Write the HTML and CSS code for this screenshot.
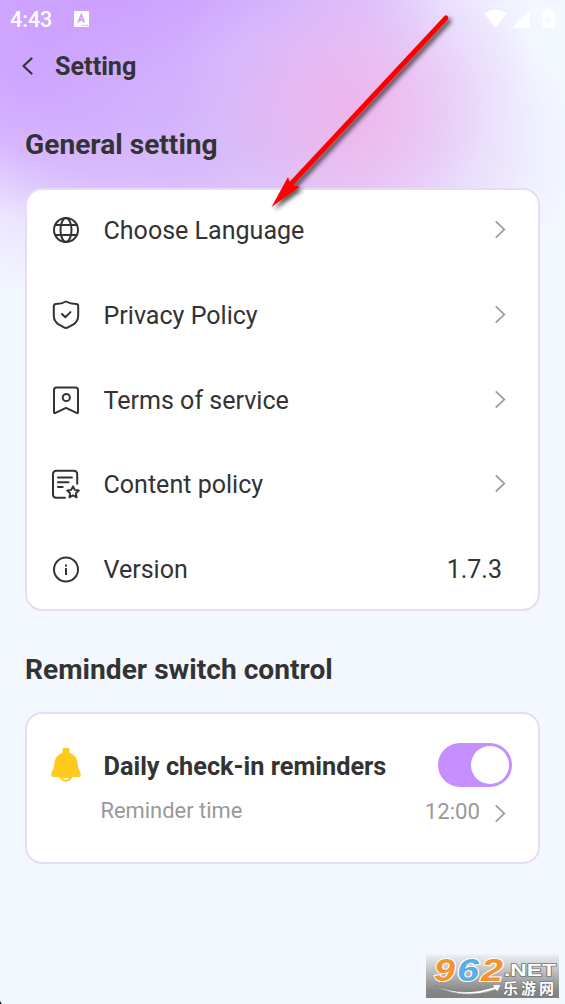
FILE: index.html
```html
<!DOCTYPE html>
<html lang="en">
<head>
<meta charset="utf-8">
<title>Setting</title>
<link rel="stylesheet" href="styles.css">
</head>
<body>
<main class="screen">
  <header class="status">
    <span class="clock">4:43</span>
    <svg class="badge" width="15" height="16" viewBox="0 0 15 16"><rect width="15" height="16" rx="1" fill="#fff"/><path d="M4.200 11.500 7.200 4l3 7.500M5.200 9h4" fill="none" stroke="#cda3fd" stroke-width="1.900"/><path d="M8 14.300h1.300M10.300 14.300h1.300M12.600 14.300h1.300" stroke="#cda3fd" stroke-width="1.300"/></svg>
    <svg class="signals" width="72" height="20" viewBox="0 0 72 20" fill="#fff"><path d="M0 4Q11.500-3 23 4L11.500 19Z"/><path d="M46 1v18H28Z"/><path fill-rule="evenodd" d="M62 0h5v2h2q1.500 0 1.500 1.500v14q0 1.500-1.500 1.500h-9q-1.500 0-1.500-1.500v-14Q58.500 2 60 2h2ZM65.500 5l-4 6h2.500l-.5 5 4-6.500H65Z"/></svg>
  </header>
  <nav class="topbar">
    <svg width="13" height="18" viewBox="0 0 13 18"><path d="M10.500 1.500 2.500 9l8 7.500" fill="none" stroke="#333" stroke-width="2.200" stroke-linecap="round" stroke-linejoin="round"/></svg>
    <h1 class="title">Setting</h1>
  </nav>

  <h2 class="heading general">General setting</h2>
  <section class="card list">
    <div class="row">
      <svg class="icon" viewBox="0 0 30 30"><circle cx="15" cy="15" r="12"/><ellipse cx="15" cy="15" rx="5.500" ry="12"/><path d="M4.500 10h21M4.500 20h21"/></svg>
      <span class="label">Choose Language</span>
      <svg class="chevron" viewBox="0 0 12 20"><path d="M1.500 1.500 10.500 10l-9 8.500"/></svg>
    </div>
    <div class="row">
      <svg class="icon" viewBox="0 0 30 30"><path d="M15 1.500Q19 3.800 25.200 4.100 27.200 4.300 27.200 6.300V15.500Q27.200 21.500 22 24.700L17 27.400Q15 28.500 13 27.400L8 24.700Q2.800 21.500 2.800 15.500V6.300Q2.800 4.300 4.800 4.100 11 3.800 15 1.500ZM11 14l3.300 3.300 5.200-5.200"/></svg>
      <span class="label">Privacy Policy</span>
      <svg class="chevron" viewBox="0 0 12 20"><path d="M1.500 1.500 10.500 10l-9 8.500"/></svg>
    </div>
    <div class="row">
      <svg class="icon" viewBox="0 0 30 30"><path d="M5.500 2.500h19q2.500 0 2.500 2.500v22q0 1.700-1.500.9L15 22.800 4.500 27.900Q3 28.700 3 27V5q0-2.500 2.500-2.500Z"/><circle cx="15.300" cy="12.500" r="3.600"/></svg>
      <span class="label">Terms of service</span>
      <svg class="chevron" viewBox="0 0 12 20"><path d="M1.500 1.500 10.500 10l-9 8.500"/></svg>
    </div>
    <div class="row">
      <svg class="icon" viewBox="0 0 30 30"><path d="M14 28.800H5.500q-3.500 0-3.500-3.500V5.300q0-3.500 3.500-3.500h17.200q3.500 0 3.500 3.500v9.500M7 8.500h14M7 13.200h10.500M7 18h4.700"/><path stroke-width="1.900" d="m22 17.300 1.800 3.600 4 .6-2.900 2.800.7 4-3.600-1.900-3.600 1.900.7-4-2.900-2.800 4-.6Z"/></svg>
      <span class="label">Content policy</span>
      <svg class="chevron" viewBox="0 0 12 20"><path d="M1.500 1.500 10.500 10l-9 8.500"/></svg>
    </div>
    <div class="row">
      <svg class="icon" viewBox="0 0 30 30"><circle cx="15" cy="15.500" r="12"/><path stroke-linecap="butt" d="M15 14v7M15 10.500v2"/></svg>
      <span class="label">Version</span>
      <span class="version">1.7.3</span>
    </div>
  </section>

  <h2 class="heading reminder">Reminder switch control</h2>
  <section class="card remind">
    <div class="daily">
      <svg class="bell" width="32" height="36" viewBox="0 0 32 36"><path fill="#ffca1c" d="M12.500 2.500Q12.500 1 14 1h4q1.500 0 1.500 1.500v3.200Q27 8.500 27.700 16.500q.3 5.500 2.300 8.200 2.500 5.300-2.500 5.300h-23q-5 0-2.500-5.300 2-2.700 2.300-8.200Q5 8.500 12.500 5.700Z"/><path d="M10.500 29q1.200 4.600 5.500 4.600t5.500-4.600" fill="#ffca1c" stroke="#ffca1c" stroke-width="2.200"/><path d="M12.800 30.500q3.200 1.400 6.400 0-.7 2.300-3.200 2.300t-3.200-2.300" fill="#fff"/></svg>
      <span class="daily-label">Daily check-in reminders</span>
      <span class="toggle"><span class="knob"></span></span>
    </div>
    <div class="time">
      <span class="time-label">Reminder time</span>
      <span class="time-value">12:00</span>
      <svg class="chevron" viewBox="0 0 12 20"><path d="M1.500 1.500 10.500 10l-9 8.500"/></svg>
    </div>
  </section>

  <svg class="arrow" width="200" height="210" viewBox="260 5 200 210">
    <defs><filter id="shade" x="-20%" y="-20%" width="150%" height="150%"><feDropShadow dx="3" dy="3" stdDeviation="2" flood-color="#222" flood-opacity=".75"/></filter></defs>
    <g filter="url(#shade)" fill="#fe0000"><path d="M446 18 291 184" stroke="#fe0000" stroke-width="5" stroke-linecap="round"/><path d="m271.500 207 16.500-30 2.500 7.500 9.500 2.200Z"/></g>
  </svg>

  <div class="mark">
    <svg width="133" height="44" viewBox="0 0 133 44">
      <path d="M8 31Q36 44 68 33l-2-2 9-.5-3.500 7-2-2Q36 47 8 31Z" fill="#fff" stroke="#777" stroke-width=".5"/>
      <g class="digits"><text x="8" y="27" fill="#f7922d" textLength="21" lengthAdjust="spacingAndGlyphs">9</text><text x="31" y="27" fill="#5cade2" textLength="22" lengthAdjust="spacingAndGlyphs">6</text><text x="55" y="27" fill="#f7922d" textLength="22" lengthAdjust="spacingAndGlyphs">2</text></g>
      <text class="net" x="78" y="21.500" textLength="52" lengthAdjust="spacingAndGlyphs">.NET</text>
      <text class="cn" x="77" y="40" textLength="51">乐游网</text>
    </svg>
  </div>
  <i class="corner"></i>
</main>
</body>
</html>
```
FILE: styles.css
```css
* { box-sizing: border-box; }
body { margin: 0; font-family: Roboto, sans-serif; color: #333; }
.screen {
  position: relative;
  width: 565px;
  height: 1004px;
  overflow: hidden;
  display: flex;
  flex-direction: column;
  background:
    radial-gradient(ellipse 190px 180px at 355px 110px, rgba(243,180,232,.8), rgba(240,188,236,.6) 35%, rgba(236,205,246,.25) 68%, rgba(240,225,250,0) 100%),
    radial-gradient(ellipse 290px 200px at 290px 150px, rgba(208,178,247,.75), rgba(216,192,250,.45) 55%, rgba(238,232,254,0) 100%),
    radial-gradient(ellipse 410px 310px at 130px 0, #cc9eff 0, rgba(206,164,255,.98) 38%, rgba(212,174,255,.88) 56%, rgba(226,206,255,.45) 76%, rgba(243,248,255,0) 100%),
    #f3f8ff;
}
.status { display: flex; align-items: center; height: 38px; padding: 0 9px 0 10px; }
.clock { width: 64px; font-size: 21.5px; font-weight: 500; line-height: 38px; color: #fff; padding-top: 1px; }
.signals { margin-left: auto; }
.topbar { display: flex; align-items: center; height: 56px; padding-left: 21px; gap: 21px; }
.title { margin: 0; padding-top: 2px; font-size: 25.2px; font-weight: 700; line-height: 54px; }
.heading { margin: 0; padding-left: 25px; font-size: 28.15px; line-height: 34px; font-weight: 700; white-space: nowrap; }
.general { margin-top: 34px; height: 34px; }
.card { width: 515px; margin-left: 25px; flex: none; background: #fff; border: 2px solid #e6dcf7; border-radius: 17px; }
.list { height: 423px; margin-top: 26px; display: flex; flex-direction: column; justify-content: center; }
.row { display: flex; align-items: center; flex: none; height: 84.75px; padding: 0 32px 0 24px; }
.icon { width: 30px; height: 30px; margin-left: -.5px; fill: none; stroke: #333; stroke-width: 2; stroke-linecap: round; stroke-linejoin: round; }
.label { margin-left: 23px; padding-top: 1px; font-size: 25.05px; white-space: nowrap; }
.version { margin-left: auto; margin-right: 4px; font-size: 25px; }
.chevron { width: 12px; height: 19px; margin-left: auto; margin-bottom: 1px; fill: none; stroke: #999; stroke-width: 1.8; }
.reminder { margin-top: 42px; height: 34px; }
.remind { height: 152px; margin-top: 25px; padding: 28px 26px 0 23px; }
.daily { display: flex; align-items: center; height: 46px; }
.daily-label { margin-left: 21.5px; padding-top: 2px; font-size: 25.3px; font-weight: 700; white-space: nowrap; }
.toggle { margin-left: auto; width: 74px; height: 44px; padding: 3px; border-radius: 22px; background: #c58fff; display: flex; justify-content: flex-end; }
.knob { width: 38px; height: 38px; border-radius: 50%; background: #fff; }
.time { display: flex; align-items: center; height: 44px; padding: 1px 6px 0 50.500px; color: #999; font-size: 21.9px; }
.time-value { margin-left: auto; font-size: 22.2px; }
.time .chevron { margin: 5px 0 0 14px; }
.arrow { position: absolute; left: 260px; top: 5px; overflow: visible; }
.mark { position: absolute; left: 426px; top: 954px; width: 133px; height: 44px; background: linear-gradient(#eef1f5, #858585 85%, #808080); }
.mark svg { display: block; }
.digits { font: italic 700 31px "Liberation Sans", sans-serif; stroke: #fff; stroke-width: 2; paint-order: stroke; }
.net { font: 700 17px "Liberation Sans", sans-serif; fill: #fff; stroke: #777; stroke-width: 1.5; paint-order: stroke; }
.cn { font: 700 15px "Noto Sans CJK SC", sans-serif; fill: #fff; stroke: #666; stroke-width: 1; paint-order: stroke; }
.corner { position: absolute; left: 0; bottom: 0; width: 2px; height: 3px; background: #222; clip-path: polygon(0 0, 100% 100%, 0 100%); }
```
